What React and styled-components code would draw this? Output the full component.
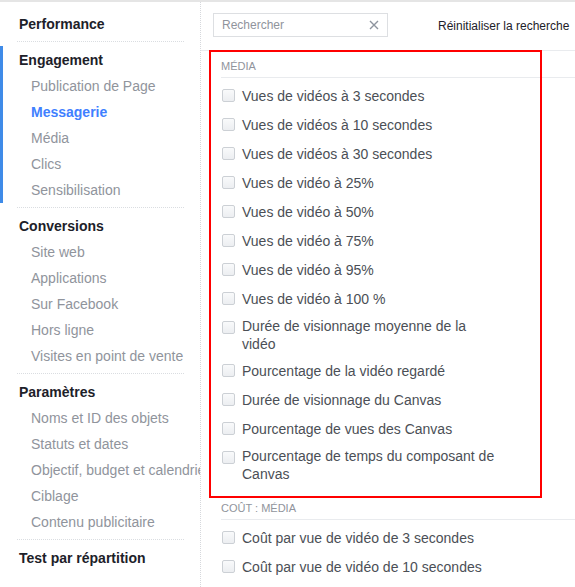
import styled, { createGlobalStyle } from "styled-components";

const GlobalStyle = createGlobalStyle`
  html, body {
    margin: 0;
    padding: 0;
    background: #fff;
  }
  body {
    font-family: "Liberation Sans", Arial, Helvetica, sans-serif;
  }
`;

const Page = styled.div`
  display: flex;
  width: 575px;
  height: 587px;
  border-top: 2px solid #e5e5e5;
  box-sizing: border-box;
  overflow: hidden;
  background: #fff;
`;

const Sidebar = styled.nav`
  flex: none;
  width: 201px;
  padding-top: 8px;
  border-right: 1px dotted #d6d8dc;
  box-sizing: border-box;
  overflow: hidden;
`;

const Group = styled.div`
  border-left: 3px solid ${(p) => (p.$active ? "#3f8be8" : "transparent")};
  padding: 1px 0 0 16px;
`;

const GroupTitle = styled.div`
  font-size: 14px;
  font-weight: bold;
  line-height: 26px;
  color: #1d2129;
  white-space: nowrap;
`;

const NavItem = styled.div`
  padding-left: 12px;
  font-size: 14px;
  line-height: 26px;
  white-space: nowrap;
  color: ${(p) => (p.$current ? "#4080ff" : "#90949c")};
  font-weight: ${(p) => (p.$current ? "bold" : "normal")};
`;

const Separator = styled.div`
  width: 167px;
  height: 0;
  margin: 4px 0 4px 17px;
  border-top: 1px dotted #dadde1;
`;

const Main = styled.main`
  position: relative;
  flex: 1;
  min-width: 0;
`;

const TopBar = styled.div`
  display: flex;
  align-items: flex-start;
  height: 49px;
  padding: 11px 12px 0;
  box-sizing: border-box;
  border-bottom: 1px solid #e9ebee;
`;

const SearchBox = styled.div`
  display: flex;
  align-items: center;
  flex: none;
  width: 175px;
  height: 24px;
  padding: 0 8px;
  box-sizing: border-box;
  border: 1px solid #dddfe2;
  background: #fff;
`;

const Placeholder = styled.span`
  flex: 1;
  font-size: 12px;
  color: #90949c;
`;

const ResetLink = styled.span`
  margin-left: 50px;
  font-size: 12px;
  line-height: 26px;
  color: #1d2129;
  white-space: nowrap;
`;

const Section = styled.section`
  padding: 8px 0 3px 20px;
`;

const SectionTitle = styled.div`
  padding-bottom: 4px;
  font-size: 11px;
  line-height: 14px;
  color: #90949c;
  border-bottom: 1px solid #e9ebee;
  white-space: nowrap;
`;

const List = styled.div`
  padding-top: 7px;
`;

const Row = styled.label`
  display: flex;
  align-items: flex-start;
  margin-bottom: 7px;
`;

const Box = styled.span`
  flex: none;
  width: 13px;
  height: 13px;
  margin: 4px 7px 0 1px;
  box-sizing: border-box;
  border: 1px solid #ccd0d5;
  border-radius: 2px;
  background: linear-gradient(#f9fafb, #eceef1);
`;

const RowText = styled.span`
  display: flex;
  align-items: center;
  min-height: 22px;
  max-width: 258px;
  font-size: 14px;
  line-height: 18px;
  color: #4b4f56;
`;

const Highlight = styled.div`
  position: absolute;
  left: 8px;
  top: 48px;
  width: 333px;
  height: 448px;
  box-sizing: border-box;
  border: 2px solid #ff0000;
  pointer-events: none;
`;

const nav = [
  { title: "Performance", items: [] },
  {
    title: "Engagement",
    active: true,
    items: ["Publication de Page", "Messagerie", "Média", "Clics", "Sensibilisation"],
    current: "Messagerie",
  },
  {
    title: "Conversions",
    items: ["Site web", "Applications", "Sur Facebook", "Hors ligne", "Visites en point de vente"],
  },
  {
    title: "Paramètres",
    items: [
      "Noms et ID des objets",
      "Statuts et dates",
      "Objectif, budget et calendrier",
      "Ciblage",
      "Contenu publicitaire",
    ],
  },
  { title: "Test par répartition", items: [] },
];

const sections = [
  {
    title: "MÉDIA",
    rows: [
      "Vues de vidéos à 3 secondes",
      "Vues de vidéos à 10 secondes",
      "Vues de vidéos à 30 secondes",
      "Vues de vidéo à 25%",
      "Vues de vidéo à 50%",
      "Vues de vidéo à 75%",
      "Vues de vidéo à 95%",
      "Vues de vidéo à 100 %",
      "Durée de visionnage moyenne de la vidéo",
      "Pourcentage de la vidéo regardé",
      "Durée de visionnage du Canvas",
      "Pourcentage de vues des Canvas",
      "Pourcentage de temps du composant de Canvas",
    ],
  },
  {
    title: "COÛT : MÉDIA",
    rows: [
      "Coût par vue de vidéo de 3 secondes",
      "Coût par vue de vidéo de 10 secondes",
    ],
  },
];

const CloseIcon = () => (
  <svg width="10" height="10" viewBox="0 0 10 10">
    <path d="M1 1 L9 9 M9 1 L1 9" stroke="#8d949e" strokeWidth="1.4" fill="none" />
  </svg>
);

export default function App() {
  return (
    <>
      <GlobalStyle />
      <Page>
        <Sidebar>
          {nav.map((g, i) => (
            <div key={g.title}>
              {i > 0 && <Separator />}
              <Group $active={g.active}>
                <GroupTitle>{g.title}</GroupTitle>
                {g.items.map((it) => (
                  <NavItem key={it} $current={it === g.current}>
                    {it}
                  </NavItem>
                ))}
              </Group>
            </div>
          ))}
        </Sidebar>
        <Main>
          <TopBar>
            <SearchBox>
              <Placeholder>Rechercher</Placeholder>
              <CloseIcon />
            </SearchBox>
            <ResetLink>Réinitialiser la recherche</ResetLink>
          </TopBar>
          {sections.map((s) => (
            <Section key={s.title}>
              <SectionTitle>{s.title}</SectionTitle>
              <List>
                {s.rows.map((r) => (
                  <Row key={r}>
                    <Box />
                    <RowText>{r}</RowText>
                  </Row>
                ))}
              </List>
            </Section>
          ))}
          <Highlight />
        </Main>
      </Page>
    </>
  );
}
